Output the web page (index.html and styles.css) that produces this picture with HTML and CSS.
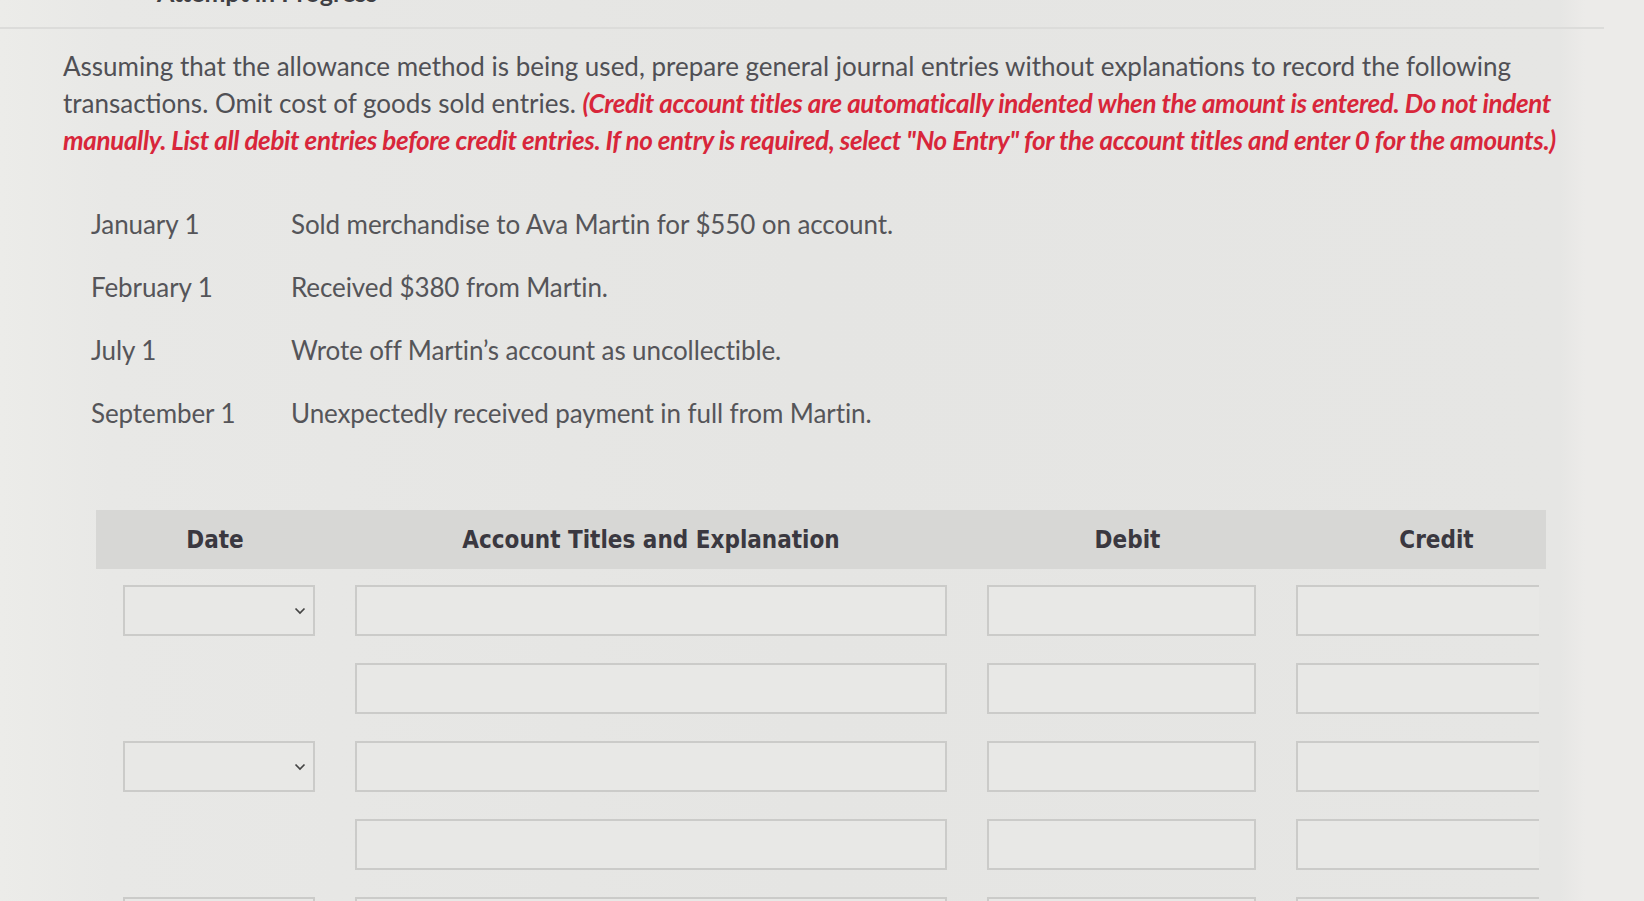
FILE: index.html
```html
<!DOCTYPE html>
<html>
<head>
<meta charset="utf-8">
<link rel="stylesheet" href="styles.css">
</head>
<body>
<div class="page">
  <div class="topbar"><span class="status">Attempt in Progress</span></div>
  <div class="divider"></div>
  <p class="intro">Assuming that the allowance method is being used, prepare general journal entries without explanations to record the following<br>transactions. Omit cost of goods sold entries. <span class="note">(Credit account titles are automatically indented when the amount is entered. Do not indent<br>manually. List all debit entries before credit entries. If no entry is required, select "No Entry" for the account titles and enter 0 for the amounts.)</span></p>

  <div class="txns">
    <div class="tdate">January 1</div><div class="tdesc">Sold merchandise to Ava Martin for $550 on account.</div>
    <div class="tdate">February 1</div><div class="tdesc">Received $380 from Martin.</div>
    <div class="tdate">July 1</div><div class="tdesc">Wrote off Martin’s account as uncollectible.</div>
    <div class="tdate">September 1</div><div class="tdesc">Unexpectedly received payment in full from Martin.</div>
  </div>

  <div class="journal">
    <div class="jhead">
      <div class="h-date">Date</div>
      <div class="h-acct">Account Titles and Explanation</div>
      <div class="h-debit">Debit</div>
      <div class="h-credit">Credit</div>
    </div>
    <div class="jrow">
      <div class="sel"><svg class="chev" width="12" height="8" viewBox="0 0 12 8"><path d="M1.5 1.5 L6 6 L10.5 1.5" fill="none" stroke="#444" stroke-width="1.7"/></svg></div>
      <div class="box"></div><div class="box"></div><div class="box credit"></div>
    </div>
    <div class="jrow">
      <div class="nosel"></div>
      <div class="box"></div><div class="box"></div><div class="box credit"></div>
    </div>
    <div class="jrow">
      <div class="sel"><svg class="chev" width="12" height="8" viewBox="0 0 12 8"><path d="M1.5 1.5 L6 6 L10.5 1.5" fill="none" stroke="#444" stroke-width="1.7"/></svg></div>
      <div class="box"></div><div class="box"></div><div class="box credit"></div>
    </div>
    <div class="jrow">
      <div class="nosel"></div>
      <div class="box"></div><div class="box"></div><div class="box credit"></div>
    </div>
    <div class="jrow">
      <div class="sel"><svg class="chev" width="12" height="8" viewBox="0 0 12 8"><path d="M1.5 1.5 L6 6 L10.5 1.5" fill="none" stroke="#444" stroke-width="1.7"/></svg></div>
      <div class="box"></div><div class="box"></div><div class="box credit"></div>
    </div>
  </div>
</div>
</body>
</html>
```

FILE: styles.css
```css
html, body {
  margin: 0;
  padding: 0;
  background: #e6e6e4;
  height: 901px;
  overflow: hidden;
}
.page {
  font-family: Lato, "Open Sans", sans-serif;
  color: #4d4d4f;
  background: linear-gradient(to right, #ecece9 0, #e8e8e6 110px, #e5e5e3 800px, #e6e6e4 1560px, #ecebe9 1585px);
  height: 901px;
  overflow: hidden;
}
.topbar {
  height: 6px;
  overflow: hidden;
  padding-left: 157px;
}
.status {
  display: block;
  margin-top: -22px;
  font-size: 25px;
  line-height: 28px;
  font-weight: 700;
  color: #3f3f44;
}
.divider {
  margin-top: 21px;
  margin-right: 40px;
  height: 2px;
  background: #dcdcda;
}
.intro {
  margin: 19px 0 0 0;
  padding-left: 63px;
  font-size: 26px;
  line-height: 37px;
  color: #505055;
  white-space: nowrap;
}
.note {
  color: #d8263a;
  font-weight: 700;
  font-style: italic;
  letter-spacing: -0.35px;
}
.txns {
  display: grid;
  grid-template-columns: 200px 1fr;
  row-gap: 27px;
  margin-top: 47px;
  padding-left: 91px;
  font-size: 26px;
  line-height: 36px;
  color: #555559;
  letter-spacing: -0.1px;
}
.journal {
  margin: 79px 0 0 96px;
  width: 1450px;
}
.jhead, .jrow {
  display: grid;
  grid-template-columns: 192px 592px 269px 243px;
  column-gap: 40px;
  padding-left: 27px;
}
.jhead {
  background: #d7d7d5;
  height: 59px;
  align-items: center;
  font-family: "DejaVu Sans Condensed", "DejaVu Sans", sans-serif;
  font-weight: 700;
  font-size: 24px;
  color: #3a3840;
  text-align: center;
}
.h-date {
  padding-right: 8px;
}
.h-debit {
  padding-left: 12px;
}
.h-credit {
  padding-left: 38px;
}
.jrow {
  margin-top: 27px;
  height: 51px;
}
.jhead + .jrow {
  margin-top: 16px;
}
.sel, .box {
  border: 2px solid #cbcbc9;
  box-sizing: border-box;
  height: 51px;
  background: #e8e8e6;
}
.box.credit {
  border-right: none;
}
.sel {
  display: flex;
  align-items: center;
  justify-content: flex-end;
  padding-right: 7px;
}
.chev {
  display: block;
}
```
